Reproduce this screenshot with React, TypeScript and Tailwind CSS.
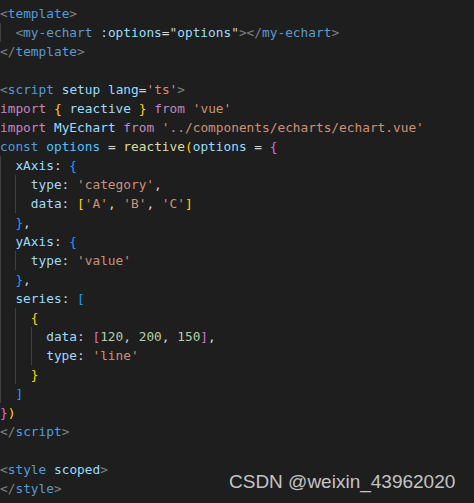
import React from "react";

const C = {
  punc: "text-[#808080]",
  tag: "text-[#569cd6]",
  attr: "text-[#9cdcfe]",
  txt: "text-[#d4d4d4]",
  str: "text-[#ce9178]",
  kw: "text-[#c586c0]",
  fn: "text-[#dcdcaa]",
  cst: "text-[#4fc1ff]",
  num: "text-[#b5cea8]",
  b1: "text-[#ffd700]",
  b2: "text-[#da70d6]",
  b3: "text-[#179fff]",
};

type Tok = [string, string];

const lines: { indent: number; toks: Tok[] }[] = [
  { indent: 0, toks: [["<", C.punc], ["template", C.tag], [">", C.punc]] },
  {
    indent: 1,
    toks: [
      ["<", C.punc],
      ["my-echart", C.tag],
      [" ", C.txt],
      [":options", C.attr],
      ["=", C.txt],
      ['"', C.txt],
      ["options", C.attr],
      ['"', C.txt],
      ["></", C.punc],
      ["my-echart", C.tag],
      [">", C.punc],
    ],
  },
  { indent: 0, toks: [["</", C.punc], ["template", C.tag], [">", C.punc]] },
  { indent: 0, toks: [] },
  {
    indent: 0,
    toks: [
      ["<", C.punc],
      ["script", C.tag],
      [" ", C.txt],
      ["setup", C.attr],
      [" ", C.txt],
      ["lang", C.attr],
      ["=", C.txt],
      ["'ts'", C.str],
      [">", C.punc],
    ],
  },
  {
    indent: 0,
    toks: [
      ["import", C.kw],
      [" ", C.txt],
      ["{", C.b1],
      [" ", C.txt],
      ["reactive", C.attr],
      [" ", C.txt],
      ["}", C.b1],
      [" ", C.txt],
      ["from", C.kw],
      [" ", C.txt],
      ["'vue'", C.str],
    ],
  },
  {
    indent: 0,
    toks: [
      ["import", C.kw],
      [" ", C.txt],
      ["MyEchart", C.attr],
      [" ", C.txt],
      ["from", C.kw],
      [" ", C.txt],
      ["'../components/echarts/echart.vue'", C.str],
    ],
  },
  {
    indent: 0,
    toks: [
      ["const", C.tag],
      [" ", C.txt],
      ["options", C.cst],
      [" = ", C.txt],
      ["reactive", C.fn],
      ["(", C.b1],
      ["options", C.attr],
      [" = ", C.txt],
      ["{", C.b2],
    ],
  },
  { indent: 1, toks: [["xAxis", C.attr], [": ", C.txt], ["{", C.b3]] },
  { indent: 2, toks: [["type", C.attr], [": ", C.txt], ["'category'", C.str], [",", C.txt]] },
  {
    indent: 2,
    toks: [
      ["data", C.attr],
      [": ", C.txt],
      ["[", C.b1],
      ["'A'", C.str],
      [", ", C.txt],
      ["'B'", C.str],
      [", ", C.txt],
      ["'C'", C.str],
      ["]", C.b1],
    ],
  },
  { indent: 1, toks: [["}", C.b3], [",", C.txt]] },
  { indent: 1, toks: [["yAxis", C.attr], [": ", C.txt], ["{", C.b3]] },
  { indent: 2, toks: [["type", C.attr], [": ", C.txt], ["'value'", C.str]] },
  { indent: 1, toks: [["}", C.b3], [",", C.txt]] },
  { indent: 1, toks: [["series", C.attr], [": ", C.txt], ["[", C.b3]] },
  { indent: 2, toks: [["{", C.b1]] },
  {
    indent: 3,
    toks: [
      ["data", C.attr],
      [": ", C.txt],
      ["[", C.b2],
      ["120", C.num],
      [", ", C.txt],
      ["200", C.num],
      [", ", C.txt],
      ["150", C.num],
      ["]", C.b2],
      [",", C.txt],
    ],
  },
  { indent: 3, toks: [["type", C.attr], [": ", C.txt], ["'line'", C.str]] },
  { indent: 2, toks: [["}", C.b1]] },
  { indent: 1, toks: [["]", C.b3]] },
  { indent: 0, toks: [["}", C.b2], [")", C.b1]] },
  { indent: 0, toks: [["</", C.punc], ["script", C.tag], [">", C.punc]] },
  { indent: 0, toks: [] },
  {
    indent: 0,
    toks: [
      ["<", C.punc],
      ["style", C.tag],
      [" ", C.txt],
      ["scoped", C.attr],
      [">", C.punc],
    ],
  },
  { indent: 0, toks: [["</", C.punc], ["style", C.tag], [">", C.punc]] },
];

export default function App() {
  return (
    <div className="relative w-[474px] h-[503px] overflow-hidden bg-[#1e1e1e]">
      <div className="pt-[4px] text-[12.8px] leading-[19px] whitespace-pre font-['DejaVu_Sans_Mono',monospace]">
        {lines.map((l, i) => (
          <div key={i} className="flex h-[19px] items-stretch">
            {Array.from({ length: l.indent }).map((_, k) => (
              <span key={k} className="w-[15.4px] shrink-0 border-l border-[#404040]" />
            ))}
            <span>
              {l.toks.map((t, j) => (
                <span key={j} className={t[1]}>
                  {t[0]}
                </span>
              ))}
            </span>
          </div>
        ))}
      </div>
      <div className="absolute left-[229px] top-[470px] text-[19px] leading-[24px] text-[#c4c4c4] whitespace-nowrap font-['Liberation_Sans',Arial,sans-serif]">
        CSDN @weixin_43962020
      </div>
    </div>
  );
}
